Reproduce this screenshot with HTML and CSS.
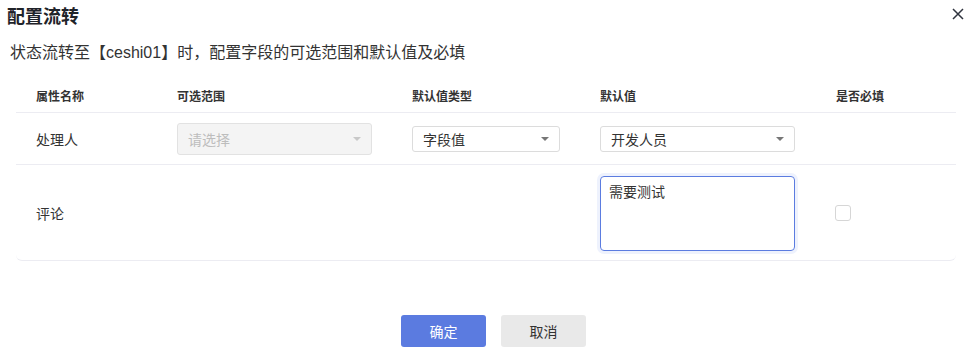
FILE: index.html
```html
<!DOCTYPE html>
<html lang="zh-CN">
<head>
    <meta charset="UTF-8">
    <meta name="viewport" content="width=device-width, initial-scale=1.0">
    <title>配置流转</title>
    <link rel="stylesheet" href="styles.css">
</head>
<body>
    <div class="dialog">
        <div class="dialog-head">
            <h2 class="title">配置流转</h2>
            <span class="close">
                <svg width="12" height="12" viewBox="0 0 12 12"><path d="M1 1L11 11M11 1L1 11" stroke="#30343f" stroke-width="1.5" fill="none"/></svg>
            </span>
        </div>
        <p class="subtitle">状态流转至【ceshi01】时，配置字段的可选范围和默认值及必填</p>

        <div class="table">
            <div class="row head-row">
                <div class="cell">属性名称</div>
                <div class="cell">可选范围</div>
                <div class="cell">默认值类型</div>
                <div class="cell">默认值</div>
                <div class="cell">是否必填</div>
            </div>
            <div class="row row-short">
                <div class="cell">处理人</div>
                <div class="cell">
                    <div class="select select-lg disabled"><span>请选择</span><i class="arrow"></i></div>
                </div>
                <div class="cell">
                    <div class="select select-sm"><span>字段值</span><i class="arrow"></i></div>
                </div>
                <div class="cell">
                    <div class="select select-md"><span>开发人员</span><i class="arrow"></i></div>
                </div>
                <div class="cell"></div>
            </div>
            <div class="row row-tall">
                <div class="cell">评论</div>
                <div class="cell"></div>
                <div class="cell"></div>
                <div class="cell">
                    <div class="textarea focused">需要测试</div>
                </div>
                <div class="cell"><span class="checkbox"></span></div>
            </div>
        </div>

        <div class="footer">
            <button type="button" class="btn btn-primary">确定</button>
            <button type="button" class="btn btn-default">取消</button>
        </div>
    </div>
</body>
</html>
```

FILE: styles.css
```css
body {
    margin: 0;
    padding: 0;
    background: #fff;
    font-family: "Liberation Sans", "Noto Sans CJK SC", sans-serif;
    color: #333;
}
.dialog {
    width: 969px;
    height: 352px;
    box-sizing: border-box;
    padding: 5px 0 0 0;
}
.dialog-head {
    display: flex;
    justify-content: space-between;
    align-items: flex-start;
    padding: 0 5px 0 7px;
}
.title {
    margin: 0;
    font-size: 18px;
    line-height: 24px;
    font-weight: bold;
    color: #1f2329;
}
.close {
    display: flex;
    margin-top: 3px;
}
.subtitle {
    margin: 13px 0 0 10px;
    font-size: 16px;
    line-height: 22px;
    color: #333;
}
.table {
    margin: 14px 13px 0 16px;
}
.row {
    display: grid;
    grid-template-columns: 141px 235px 188px 236px 1fr;
    align-items: center;
    border-bottom: 1px solid #ececf2;
}
.row .cell {
    padding-left: 20px;
    font-size: 14px;
}
.head-row {
    height: 34px;
}
.head-row .cell {
    font-size: 12px;
    font-weight: 600;
    color: #333;
}
.row-short {
    height: 51px;
}
.row-tall {
    height: 95px;
    border-radius: 0 0 6px 6px;
}
.select {
    display: flex;
    align-items: center;
    justify-content: space-between;
    box-sizing: border-box;
    border: 1px solid #dcdcdc;
    border-radius: 3px;
    padding: 0 10px;
    font-size: 14px;
    color: #333;
    background: #fff;
}
.select-lg {
    width: 195px;
    height: 32px;
    margin-top: 1px;
}
.select-sm {
    width: 148px;
    height: 26px;
}
.select-md {
    width: 195px;
    height: 26px;
}
.disabled {
    background: #f4f4f4;
    color: #bdbdbd;
    border-color: #e2e2e2;
}
.arrow {
    width: 0;
    height: 0;
    border-left: 4px solid transparent;
    border-right: 4px solid transparent;
    border-top: 4px solid #777;
}
.disabled .arrow {
    border-top-color: #c8c8c8;
}
.textarea {
    box-sizing: border-box;
    width: 195px;
    height: 75px;
    border: 1px solid #5b7ce0;
    border-radius: 4px;
    padding: 7px 8px;
    font-size: 14px;
    line-height: 16px;
    color: #333;
    box-shadow: 0 0 0 3px #eef2fd;
    margin-top: 1px;
}
.checkbox {
    display: block;
    width: 16px;
    height: 16px;
    box-sizing: border-box;
    border: 1px solid #d6d6d6;
    border-radius: 3px;
    margin-left: -1px;
}
.footer {
    display: flex;
    justify-content: center;
    gap: 15px;
    margin-top: 54px;
    padding-left: 18px;
}
.btn {
    width: 85px;
    height: 32px;
    border: none;
    border-radius: 3px;
    font-size: 14px;
    font-family: "Liberation Sans", "Noto Sans CJK SC", sans-serif;
    cursor: pointer;
}
.btn-primary {
    background: #5b7be0;
    color: #fff;
}
.btn-default {
    background: #e9e9e9;
    color: #333;
}
```
